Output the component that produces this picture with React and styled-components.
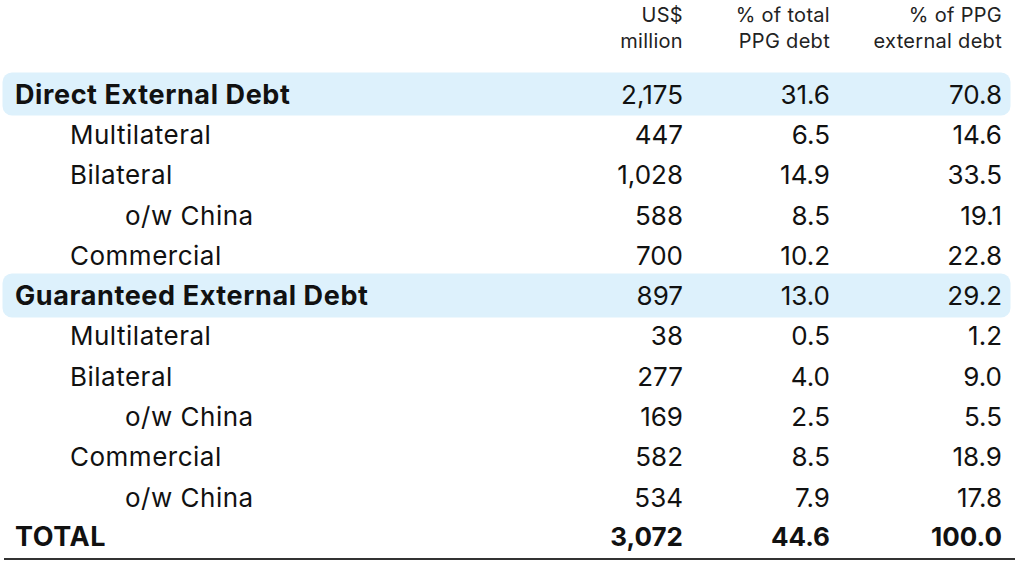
import React from "react";
import styled, { createGlobalStyle } from "styled-components";

const GlobalStyle = createGlobalStyle`
  html, body {
    margin: 0;
    padding: 0;
    background: #ffffff;
  }
  body {
    font-family: Inter, "Noto Sans", "DejaVu Sans", sans-serif;
    color: #111111;
  }
`;

const Table = styled.div`
  width: 1011px;
  margin-left: 4px;
  padding-top: 2px;
`;

const Grid = styled.div`
  display: grid;
  grid-template-columns: 1fr 120px 147px 172px;
  padding: 0 13px 0 11px;
  align-items: center;
`;

const HeadRow = styled(Grid)`
  height: 72px;
  align-items: start;
`;

const HeadCell = styled.div`
  text-align: right;
  font-size: 20px;
  line-height: 26px;
  color: #222222;
  letter-spacing: 0.3px;
`;

const Row = styled(Grid)`
  height: 40.3px;
  font-size: 26px;
  background: ${({ $band }) => ($band ? "#ddf1fc" : "transparent")};
  box-shadow: ${({ $band }) => ($band ? "0 0 0 1.5px #ddf1fc" : "none")};
  border-radius: ${({ $band }) => ($band ? "8px" : "0")};
  margin-right: ${({ $band }) => ($band ? "6px" : "0")};
  padding-right: ${({ $band }) => ($band ? "7px" : "13px")};
`;

const Label = styled.div`
  padding-left: ${({ $indent }) => $indent * 55}px;
  white-space: nowrap;
  font-size: ${({ $bold }) => ($bold ? "27px" : "26px")};
  font-weight: ${({ $bold }) => ($bold ? 700 : 400)};
  letter-spacing: ${({ $bold }) => ($bold ? "0.6px" : "0.5px")};
`;

const Num = styled.div`
  text-align: right;
  font-weight: ${({ $bold }) => ($bold ? 700 : 400)};
`;

const Total = styled(Row)`
  border-bottom: 2px solid #333333;
  height: 39px;
  padding-bottom: 2px;
`;

const rows = [
  { label: "Direct External Debt", v: ["2,175", "31.6", "70.8"], band: true },
  { label: "Multilateral", indent: 1, v: ["447", "6.5", "14.6"] },
  { label: "Bilateral", indent: 1, v: ["1,028", "14.9", "33.5"] },
  { label: "o/w China", indent: 2, v: ["588", "8.5", "19.1"] },
  { label: "Commercial", indent: 1, v: ["700", "10.2", "22.8"] },
  { label: "Guaranteed External Debt", v: ["897", "13.0", "29.2"], band: true },
  { label: "Multilateral", indent: 1, v: ["38", "0.5", "1.2"] },
  { label: "Bilateral", indent: 1, v: ["277", "4.0", "9.0"] },
  { label: "o/w China", indent: 2, v: ["169", "2.5", "5.5"] },
  { label: "Commercial", indent: 1, v: ["582", "8.5", "18.9"] },
  { label: "o/w China", indent: 2, v: ["534", "7.9", "17.8"] },
];

export default function App() {
  return (
    <>
      <GlobalStyle />
      <Table>
        <HeadRow>
          <div />
          <HeadCell>
            US$
            <br />
            million
          </HeadCell>
          <HeadCell>
            % of total
            <br />
            PPG debt
          </HeadCell>
          <HeadCell>
            % of PPG
            <br />
            external debt
          </HeadCell>
        </HeadRow>
        {rows.map((r, i) => (
          <Row key={i} $band={r.band}>
            <Label $indent={r.indent || 0} $bold={r.band}>
              {r.label}
            </Label>
            {r.v.map((n, j) => (
              <Num key={j}>{n}</Num>
            ))}
          </Row>
        ))}
        <Total>
          <Label $indent={0} $bold>
            TOTAL
          </Label>
          <Num $bold>3,072</Num>
          <Num $bold>44.6</Num>
          <Num $bold>100.0</Num>
        </Total>
      </Table>
    </>
  );
}
